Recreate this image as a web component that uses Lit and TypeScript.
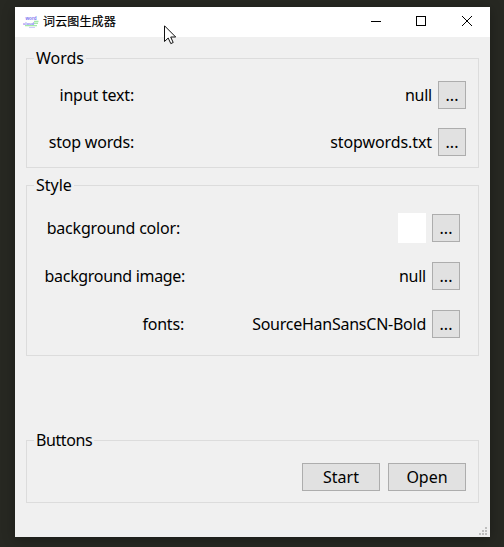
import { LitElement, html, css, svg } from "lit";
import { customElement, property } from "lit/decorators.js";

const FONT = css`"Noto Sans", "Noto Sans CJK SC", sans-serif`;

@customElement("group-box")
class GroupBox extends LitElement {
  @property() heading = "";

  static styles = css`
    :host { display: block; box-sizing: border-box; border: 1px solid #dcdcdc; }
    .legend {
      display: block; width: max-content; height: 20px; margin: -10px 0 0 7px;
      padding: 0 2px; background: #f0f0f0; line-height: 18px;
    }
  `;

  render() {
    return html`<span class="legend">${this.heading}</span><slot></slot>`;
  }
}

@customElement("push-button")
class PushButton extends LitElement {
  static styles = css`
    :host { display: block; flex: none; width: 28px; height: 28px; }
    button {
      display: block; width: 100%; height: 100%; box-sizing: border-box; margin: 0; padding: 0;
      border: 1px solid #adadad; border-radius: 0; background: #e1e1e1; color: #000;
      font: inherit; letter-spacing: inherit; line-height: 26px; text-align: center;
    }
  `;

  render() {
    return html`<button><slot></slot></button>`;
  }
}

@customElement("app-root")
class AppRoot extends LitElement {
  static styles = css`
    :host {
      display: block; position: relative; box-sizing: border-box; width: 504px; height: 547px;
      padding: 7px 14px 10px 15px; overflow: hidden; background: #272822;
      font-family: ${FONT}; font-size: 16px; color: #000;
    }
    .window {
      display: flex; flex-direction: column; height: 530px; background: #f0f0f0;
      box-shadow: 0 2px 12px rgba(0, 0, 0, 0.3);
    }
    .titlebar { display: flex; align-items: center; flex: none; height: 30px; background: #fff; }
    .logo { flex: none; margin-left: 8px; }
    .title {
      flex: 1; margin-left: 4px; font: 12px/28px "Noto Sans CJK SC", sans-serif;
      letter-spacing: 0.15px; white-space: nowrap; -webkit-text-stroke: 0.2px #000;
      height: 30px;
    }
    .controls { flex: none; }
    .content { display: flex; flex-direction: column; flex: 1; padding: 21px 11px 0; position: relative; }
    .words { height: 110px; }
    .style { height: 171px; margin-top: 17px; }
    .actions { height: 63px; margin-top: 84px; letter-spacing: -0.4px; }
    .row { display: flex; align-items: center; height: 28px; white-space: nowrap; line-height: 28px; }
    .label { text-align: right; letter-spacing: -0.2px; }
    .value { flex: 1; text-align: right; margin-right: 6px; letter-spacing: -0.25px; }
    .value.file { letter-spacing: -0.1px; }
    .words .rows { display: grid; gap: 19px; padding: 12px 12px 0 0; }
    .words .label { width: 107px; }
    .style .rows { display: grid; gap: 20px; padding: 18px 18px 0 0; }
    .style .label { width: 158px; }
    .style .label.color { width: 153px; }
    .style .label.image { letter-spacing: -0.32px; }
    .style .label.fonts { width: 157px; }
    .swatch { width: 28px; height: 30px; margin: 0 6px 0 auto; background: #fff; }
    .buttons { display: flex; justify-content: flex-end; gap: 8px; padding: 12px 12px 0 0; letter-spacing: 0; }
    .buttons push-button { width: 78px; }
    .grip { position: absolute; right: 3px; bottom: 2px; }
    .cursor { position: absolute; left: 164px; top: 25px; }
  `;

  render() {
    const dots = [[6, 0], [3, 3], [6, 3], [0, 6], [3, 6], [6, 6]];
    return html`
      <div class="window">
        <div class="titlebar">
          <svg class="logo" width="16" height="14" viewBox="0 0 16 14" font-family="Liberation Sans, sans-serif" font-weight="bold">
            <text x="2.5" y="5" font-size="4.6" textLength="11" lengthAdjust="spacingAndGlyphs" fill="#7670ee">word</text>
            <text x="0" y="9.6" font-size="4" textLength="11" lengthAdjust="spacingAndGlyphs" fill="#8380f2">cloud</text>
            <path d="M11 6.5h4.5M11 8.3h4M2 10.6h12" stroke="#a5e8a9" stroke-width="1.3" />
            <path d="M6 12.4h6" stroke="#c8c6f8" stroke-width="1" />
          </svg>
          <span class="title">词云图生成器</span>
          <svg class="controls" width="137" height="30" fill="none" stroke="#000" stroke-width="1">
            <path d="M18 14.5h10" />
            <rect x="63.5" y="9.5" width="9" height="9" />
            <path d="M109 9l10 10M119 9l-10 10" />
          </svg>
        </div>
        <div class="content">
          <group-box class="words" heading="Words">
            <div class="rows">
              <div class="row"><span class="label">input text:</span><span class="value">null</span><push-button>...</push-button></div>
              <div class="row"><span class="label">stop words:</span><span class="value file">stopwords.txt</span><push-button>...</push-button></div>
            </div>
          </group-box>
          <group-box class="style" heading="Style">
            <div class="rows">
              <div class="row"><span class="label color">background color:</span><span class="swatch"></span><push-button>...</push-button></div>
              <div class="row"><span class="label image">background image:</span><span class="value">null</span><push-button>...</push-button></div>
              <div class="row"><span class="label fonts">fonts:</span><span class="value">SourceHanSansCN-Bold</span><push-button>...</push-button></div>
            </div>
          </group-box>
          <group-box class="actions" heading="Buttons">
            <div class="buttons"><push-button>Start</push-button><push-button>Open</push-button></div>
          </group-box>
          <svg class="grip" width="8" height="8" fill="#bfbfbf">
            ${dots.map(([x, y]) => svg`<rect x=${x} y=${y} width="2" height="2" />`)}
          </svg>
        </div>
      </div>
      <svg class="cursor" width="13" height="21" viewBox="0 0 13 21">
        <path d="M.5 .8V16.5L4.2 13L6.8 18.6L9.2 17.5L6.7 12H11.7Z" fill="#fff" stroke="#111" stroke-width="1" />
      </svg>
    `;
  }
}
